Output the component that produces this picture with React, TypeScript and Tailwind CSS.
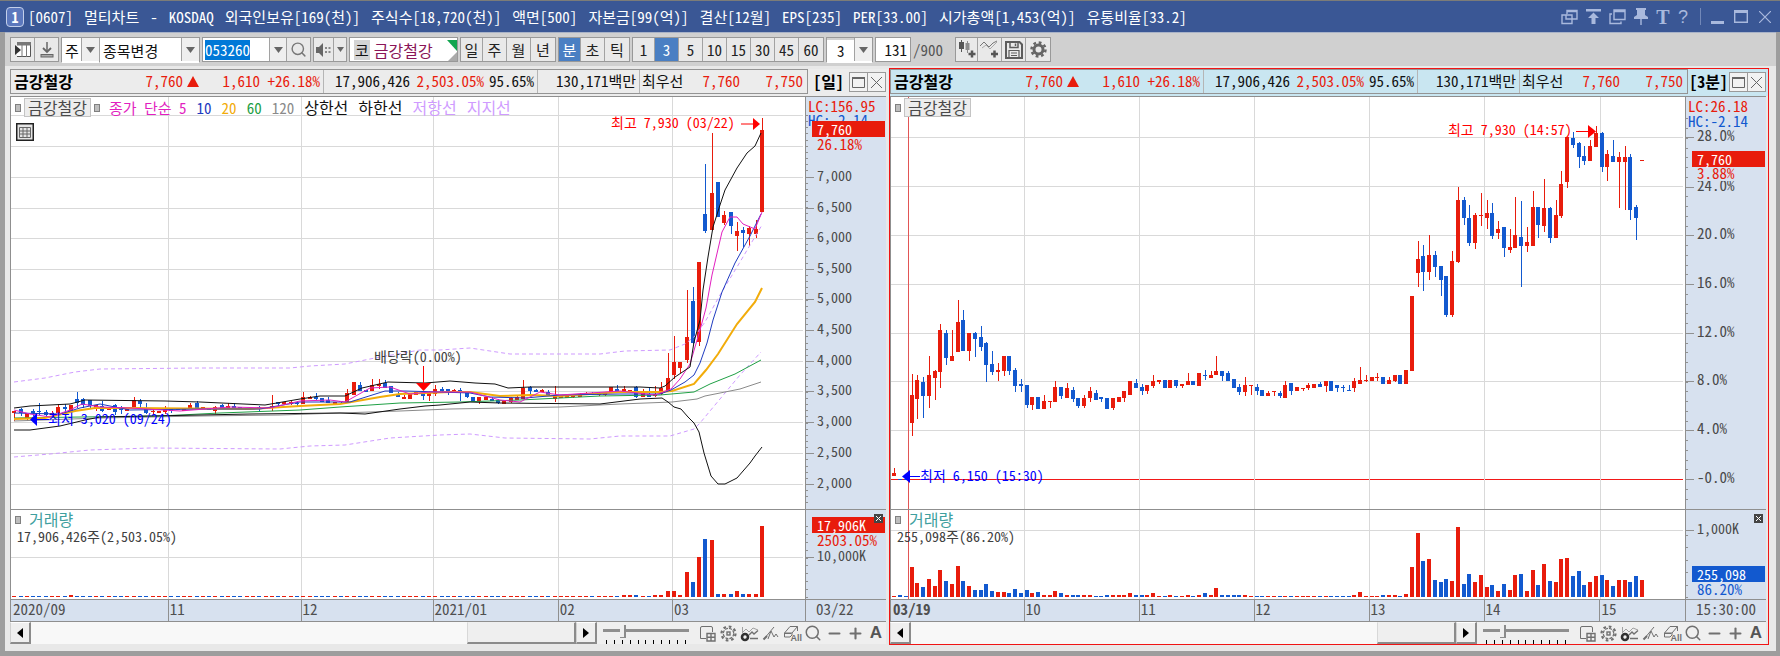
import type { ReactNode } from 'react';
import { Minus, Plus, Search } from 'lucide-react';

type Tone = 'r' | 'b';
type Candle = { tone: Tone; high: number; top: number; bottom: number; low: number };
type Point = [number, number];

const RED = '#e81c0c';
const BLUE = '#1259cf';
const GRID = '#d9d9d9';
const PRICE_TOP = 97;
const PRICE_H = 412;
const VOL_TOP = 510;
const VOL_H = 89;
const PLOT_W = 794;
const BASE = 597;

// Each entry: tone, high, body top, body bottom, low.
const parse = (source: string): Candle[] =>
  source
    .trim()
    .split(/\s+/)
    .map((entry) => {
      const [high, top, bottom, low] = entry.slice(1).split(',').map(Number);
      return { tone: entry[0] as Tone, high, top, bottom, low };
    });

const DAILY = parse(`
r411,411,413,421 b408,409,413,416 r413,413,418,421 b409,411,413,416 b403,411,412,415 b410,412,415,418
r411,413,415,416 r404,407,413,414 b404,407,409,413 r405,405,412,412 b392,399,403,408 b398,399,405,408
b400,400,406,408 r405,405,409,411 b401,406,411,412 r408,408,410,410 b404,405,412,415 b406,409,410,414
r407,407,411,411 r397,400,407,407 b399,401,404,408 b403,408,413,414 r408,411,412,414 r411,411,413,413
r406,408,412,414 b408,408,411,413 b408,408,410,410 r408,408,411,411 r403,405,408,408 b401,403,409,409
r407,407,409,409 b408,408,410,410 r406,407,411,414 b404,405,409,409 r403,406,409,409 b403,406,408,409
b407,407,409,409 r408,408,410,410 r408,408,409,409 b406,407,409,411 r408,408,409,409 r395,406,408,411
b402,402,404,406 r402,402,404,405 r401,402,404,405 b401,403,404,407 r392,397,404,404 r396,397,399,399
b393,397,399,400 b398,398,402,402 b397,400,403,403 r402,402,404,404 b401,401,402,404 r389,393,402,403
r382,382,395,395 b382,385,391,391 b390,390,392,392 r379,385,391,391 r379,384,386,389 b380,383,388,388
b386,386,393,393 b392,394,397,397 r395,397,399,399 r394,394,399,399 r392,392,395,395 b392,394,396,400
r391,393,396,401 r385,389,394,396 b387,389,391,393 b389,389,393,395 r389,390,392,393 b388,390,393,401
b391,391,397,398 b397,397,401,401 r397,397,401,404 r396,397,400,400 b397,399,401,401 b399,400,403,404
r400,401,404,404 r397,398,402,403 r396,397,400,400 r380,388,399,399 b386,387,391,394 b389,390,392,392
r389,390,392,392 b390,392,396,396 r386,395,399,402 r395,396,398,398 r396,396,398,398 r396,396,397,398
r393,394,397,397 r392,393,395,395 b392,393,395,395 r392,393,395,396 r393,393,395,396 r387,387,393,393
b385,389,393,393 r386,389,392,393 r390,390,393,393 b386,387,397,398 r389,391,397,397 b388,394,397,397
r386,394,396,397 r382,388,394,395 r353,378,391,391 r336,362,375,379 r362,362,368,373 r290,337,360,363
b287,301,343,344 r262,262,342,346 b164,214,231,233 r133,193,230,230 b182,182,217,217 r211,215,223,225
b212,212,226,234 r222,231,236,251 b227,230,233,247 r226,228,234,246 r220,229,234,238 r118,130,212,212`);

const MINUTE = parse(`
r468,473,476,476 b479,479,480,479 b479,479,480,479 r374,395,423,436 r375,380,399,419 b377,382,396,418
r356,375,396,408 r370,371,378,400 r324,330,372,388 b330,333,358,365 r330,356,361,361 r300,322,352,352
b310,320,351,351 r333,333,351,361 b332,333,339,357 b326,337,347,351 b342,343,365,382 b351,364,372,375
r363,370,372,381 r356,356,371,376 b356,356,371,375 b368,370,386,392 b379,384,386,392 b385,385,405,408
r397,397,405,410 b397,397,409,409 r395,401,409,409 r401,401,402,408 r381,387,402,402 b387,387,396,399
r383,388,398,398 b387,390,399,402 b398,398,406,408 r395,398,406,408 r387,391,398,402 b390,393,400,400
b397,397,399,402 b398,398,409,409 r398,398,408,410 r397,397,402,402 r391,391,398,402 r381,381,395,395
b379,383,388,388 b384,387,391,395 r385,385,391,394 r375,381,386,388 r380,380,382,384 b380,380,388,388
r380,380,388,388 b380,380,386,388 r384,384,386,388 r373,381,385,385 b381,381,385,385 r373,373,386,386
b370,375,376,380 r371,375,378,378 r356,371,375,375 b371,371,376,381 b371,373,381,381 b379,379,388,388
b384,387,392,395 r377,385,392,396 r385,385,386,395 b384,387,391,395 b390,390,396,396 r391,393,396,396
r391,391,392,396 b391,393,396,398 r381,385,398,398 b383,383,391,395 r387,387,391,391 r388,388,389,391
r383,385,388,390 r384,384,388,388 b382,384,387,387 r381,381,386,392 b381,381,391,391 b385,385,388,392
b385,387,388,392 b385,390,391,391 r378,381,388,392 r367,380,384,384 r375,380,381,382 r377,377,381,381
r373,377,378,381 b377,377,384,384 r377,380,384,384 r375,375,381,382 b375,375,384,384 r370,370,384,384
r296,296,371,371 r241,259,273,287 b245,256,272,291 r235,255,272,280 b251,255,267,277 b266,266,280,296
b276,276,315,317 r251,261,315,317 r187,200,262,263 b197,200,218,225 b205,218,243,246 r213,215,243,249
r193,215,216,226 r200,213,218,229 b203,213,236,239 r221,229,233,239 b227,227,248,257 r229,247,250,253
r197,235,248,248 b201,237,246,287 r227,242,246,252 r191,207,246,246 b207,207,225,238 r179,208,226,232
b207,208,238,243 r200,215,238,238 r171,184,216,218 r137,137,182,188 b132,138,145,148 b142,143,157,168
b146,156,161,165 r140,146,161,161 r126,133,147,147 b132,133,167,172 r150,154,167,181 b140,156,162,162
r152,157,162,208 r146,157,162,210 b154,157,210,220 b205,207,218,240 r160,160,161,161`);

const DAILY_VOL: Record<number, number> = {
  9: 2, 97: 2, 98: 2, 99: 2, 102: 2, 103: 2, 104: 6, 105: 6, 106: 2, 107: 25, 108: 15, 109: 40,
  110: 58, 111: 57, 112: 3, 113: 3, 114: 3, 115: 6, 116: 3, 117: 3, 118: 3, 119: 71,
};

const MINUTE_VOL = [
  1, 2, 1, 30, 14, 10, 18, 11, 27, 16, 13, 31, 16, 11, 7, 7, 13, 6, 5, 5, 4, 8, 4, 7, 4, 5, 2, 2, 6, 4, 2, 2, 2, 2, 2,
  1, 1, 2, 2, 2, 2, 4, 2, 2, 2, 4, 1, 1, 2, 1, 1, 2, 1, 2, 4, 2, 9, 2, 2, 2, 2, 2, 1, 1, 1, 1, 1, 1, 1, 1, 1, 1, 1, 1,
  1, 1, 1, 1, 1, 1, 2, 5, 1, 1, 1, 2, 2, 2, 1, 3, 30, 64, 36, 38, 17, 15, 18, 16, 70, 13, 23, 15, 22, 10, 12, 6, 13, 7,
  22, 23, 6, 27, 12, 33, 16, 15, 38, 39, 21, 26, 12, 15, 21, 22, 17, 11, 17, 17, 15, 21, 17,
];

const dailyX = (i: number) => Math.round(14.3 + 6.283 * i);
const minuteX = (i: number) => Math.round(894.3 + 5.75 * i);

type Curve = { color: string; width?: number; dash?: string; points: Point[] };

const CURVES: Curve[] = [
  { color: '#cf9bff', dash: '4 3', points: [[14, 382], [45, 378], [75, 372], [100, 369], [200, 368], [290, 368], [310, 366], [345, 364], [375, 358], [420, 350], [440, 350], [470, 348], [510, 354], [600, 354], [625, 351], [670, 350], [685, 344], [695, 336], [705, 322], [720, 295], [740, 262], [762, 225]] },
  { color: '#cf9bff', dash: '4 3', points: [[14, 457], [50, 454], [90, 450], [150, 448], [280, 449], [310, 446], [345, 445], [390, 438], [440, 435], [470, 434], [505, 438], [590, 439], [620, 436], [670, 436], [694, 429], [700, 423], [715, 405], [740, 375], [761, 352]] },
  { color: '#8a8a8a', points: [[14, 421], [100, 418], [200, 416], [280, 415], [400, 411], [450, 409], [560, 407], [620, 404], [672, 402], [697, 399], [705, 396], [740, 389], [761, 382]] },
  { color: '#1fa045', points: [[14, 418], [80, 417], [160, 416], [220, 413], [300, 410], [340, 407], [400, 403], [460, 402], [520, 400], [600, 396], [660, 395], [694, 392], [710, 384], [735, 374], [761, 360]] },
  { color: '#f2ac0a', width: 2, points: [[14, 419], [45, 418], [75, 411], [95, 408], [130, 408], [250, 409], [300, 406], [340, 404], [380, 397], [400, 394], [450, 392], [470, 392], [500, 396], [530, 395], [560, 396], [620, 392], [660, 392], [672, 391], [694, 384], [706, 370], [718, 354], [737, 324], [755, 302], [762, 288]] },
  { color: '#1f3bc0', points: [[14, 413], [60, 414], [80, 408], [100, 404], [130, 410], [200, 409], [260, 409], [300, 402], [350, 402], [385, 391], [405, 391], [440, 392], [470, 393], [490, 397], [525, 398], [560, 395], [620, 394], [660, 394], [671, 390], [685, 382], [694, 375], [700, 363], [707, 343], [713, 320], [722, 292], [735, 263], [750, 236], [761, 214]] },
  { color: '#e21fc0', points: [[14, 410], [30, 414], [50, 417], [70, 410], [82, 404], [100, 407], [130, 408], [180, 411], [230, 407], [270, 408], [300, 401], [330, 400], [345, 402], [370, 388], [390, 387], [410, 394], [430, 392], [470, 392], [500, 400], [520, 402], [540, 392], [560, 395], [620, 391], [655, 395], [671, 389], [680, 379], [690, 364], [700, 330], [706, 308], [712, 275], [722, 232], [730, 217], [737, 217], [743, 224], [755, 229], [762, 212]] },
  { color: '#111111', points: [[14, 430], [30, 430], [60, 426], [85, 420], [100, 417], [150, 416], [250, 414], [340, 413], [365, 414], [400, 409], [425, 406], [440, 405], [470, 402], [500, 403], [600, 404], [640, 399], [662, 398], [668, 402], [674, 407], [681, 409], [688, 417], [694, 423], [699, 432], [704, 453], [711, 476], [718, 484], [725, 484], [737, 478], [750, 463], [755, 456], [762, 447]] },
  { color: '#111111', points: [[14, 408], [30, 406], [70, 404], [85, 400], [165, 401], [200, 402], [265, 405], [300, 399], [320, 396], [345, 396], [362, 388], [388, 382], [425, 383], [450, 381], [475, 383], [495, 384], [508, 388], [530, 387], [640, 387], [660, 388], [665, 386], [675, 377], [690, 367], [694, 342], [700, 320], [703, 290], [708, 257], [713, 227], [720, 205], [725, 190], [737, 168], [747, 153], [755, 146], [761, 133]] },
];

type Note = { text: string; x: number; y: number; cls: string };
type Mark = { text: string; y: number; cls?: string; tick?: boolean };

type PanelData = {
  id: string;
  x0: number;
  active: boolean;
  period: string;
  candles: Candle[];
  xAt: (i: number) => number;
  volumes: (i: number) => number;
  vGrid: number[];
  hGrid: number[];
  volGrid: number;
  notes: Note[];
  priceMarks: Mark[];
  volMarks: Mark[];
  minorStep: number;
  volStep: number;
  dates: { text: string; from: number; to: number }[];
  lastDate: string;
  volumeText: string;
  thumb: string;
};

const tagRed = 'bg-[#e81c0c] text-white w-[73px] left-[6px] pl-[5px]';
const tagBlue = 'bg-[#1259cf] text-white w-[73px] left-[6px] pl-[5px]';
const labelCls = 'left-[11px] text-[#4a4a4a]';

const PANELS: PanelData[] = [
  {
    id: 'day', x0: 11, active: false, period: '[일]', candles: DAILY, xAt: dailyX,
    volumes: (i) => DAILY_VOL[i] ?? 1,
    vGrid: [168, 301, 433, 558, 672],
    hGrid: [115, 146, 177, 208, 238, 269, 299, 330, 361, 391, 422, 453, 484],
    volGrid: 557,
    notes: [
      { text: '최고 7,930 (03/22)', x: 611, y: 122, cls: 'text-[#ff0000]' },
      { text: '배당락(0.00%)', x: 374, y: 356, cls: 'text-[#404040]' },
      { text: '최저 3,020 (09/24)', x: 48, y: 418, cls: 'text-[#0000ff]' },
    ],
    priceMarks: [
      { text: 'LC:156.95', y: 107, cls: 'left-[2px] text-[15px] text-[#e81c0c]' },
      { text: 'HC:-2.14', y: 121, cls: 'left-[2px] text-[15px] text-[#1259cf]' },
      { text: '7,760', y: 130, cls: tagRed },
      { text: '26.18%', y: 145, cls: 'left-[11px] text-[15px] text-[#e81c0c]' },
      { text: '7,000', y: 177, tick: true },
      { text: '6,500', y: 208, tick: true },
      { text: '6,000', y: 238, tick: true },
      { text: '5,500', y: 269, tick: true },
      { text: '5,000', y: 299, tick: true },
      { text: '4,500', y: 330, tick: true },
      { text: '4,000', y: 361, tick: true },
      { text: '3,500', y: 391, tick: true },
      { text: '3,000', y: 422, tick: true },
      { text: '2,500', y: 453, tick: true },
      { text: '2,000', y: 484, tick: true },
    ],
    volMarks: [
      { text: '17,906K', y: 526, cls: tagRed },
      { text: '2503.05%', y: 541, cls: 'left-[11px] text-[15px] text-[#e81c0c]' },
      { text: '10,000K', y: 557, tick: true },
    ],
    minorStep: 6.15, volStep: 7.9,
    dates: [
      { text: '2020/09', from: 11, to: 168 },
      { text: '11', from: 168, to: 301 },
      { text: '12', from: 301, to: 433 },
      { text: '2021/01', from: 433, to: 558 },
      { text: '02', from: 558, to: 672 },
      { text: '03', from: 672, to: 805 },
    ],
    lastDate: '03/22', volumeText: '17,906,426주(2,503.05%)', thumb: 'w-[109px]',
  },
  {
    id: 'minute', x0: 891, active: true, period: '[3분]', candles: MINUTE, xAt: minuteX,
    volumes: (i) => MINUTE_VOL[i] ?? 1,
    vGrid: [1024, 1139, 1254, 1369, 1484, 1600],
    hGrid: [137, 186, 235, 284, 333, 381, 430],
    volGrid: 530,
    notes: [
      { text: '최고 7,930 (14:57)', x: 1448, y: 129, cls: 'text-[#ff0000]' },
      { text: '최저 6,150 (15:30)', x: 920, y: 475, cls: 'text-[#0000ff]' },
    ],
    priceMarks: [
      { text: 'LC:26.18', y: 107, cls: 'left-[2px] text-[15px] text-[#e81c0c]' },
      { text: 'HC:-2.14', y: 122, cls: 'left-[2px] text-[15px] text-[#1259cf]' },
      { text: '28.0%', y: 137, tick: true },
      { text: '24.0%', y: 187, tick: true },
      { text: '3.88%', y: 174, cls: 'left-[11px] text-[15px] text-[#e81c0c] bg-[#d7e1ef]' },
      { text: '7,760', y: 160, cls: tagRed },
      { text: '20.0%', y: 235, tick: true },
      { text: '16.0%', y: 284, tick: true },
      { text: '12.0%', y: 333, tick: true },
      { text: '8.0%', y: 381, tick: true },
      { text: '4.0%', y: 430, tick: true },
      { text: '-0.0%', y: 479, tick: true },
    ],
    volMarks: [
      { text: '1,000K', y: 530, tick: true },
      { text: '255,098', y: 575, cls: tagBlue },
      { text: '86.20%', y: 590, cls: 'left-[11px] text-[15px] text-[#1259cf]' },
    ],
    minorStep: 9.75, volStep: 12.5,
    dates: [
      { text: '03/19', from: 891, to: 1024 },
      { text: '10', from: 1024, to: 1139 },
      { text: '11', from: 1139, to: 1254 },
      { text: '12', from: 1254, to: 1369 },
      { text: '13', from: 1369, to: 1484 },
      { text: '14', from: 1484, to: 1600 },
      { text: '15', from: 1600, to: 1685 },
    ],
    lastDate: '15:30:00', volumeText: '255,098주(86.20%)', thumb: 'w-[79px]',
  },
];

const toneOf = (t: Tone) => (t === 'r' ? RED : BLUE);
const toPath = (pts: Point[]) => pts.map((p) => p.join(',')).join(' ');
const pct = (v: number, from: number, size: number) => `${((v - from) / size) * 100}%`;

function PricePlot({ p }: { p: PanelData }) {
  return (
    <svg className="absolute inset-0 size-full" viewBox={`${p.x0} ${PRICE_TOP} ${PLOT_W} ${PRICE_H}`} preserveAspectRatio="none" aria-hidden="true">
      <g shapeRendering="crispEdges">
        {p.active && <rect x={p.x0} y={479} width={PLOT_W - 2} height={1} fill="#f21818" />}
        {p.hGrid.map((y) => <rect key={y} x={p.x0} y={y} width={PLOT_W - 2} height={1} fill={GRID} />)}
        {p.vGrid.map((x) => <rect key={x} x={x} y={PRICE_TOP} width={1} height={PRICE_H} fill={GRID} />)}
        {p.active && <rect x={908} y={PRICE_TOP} width={1} height={PRICE_H} fill="#e25555" />}
      </g>
      <g shapeRendering="crispEdges">
        {p.candles.map((c, i) => (
          <g key={i} fill={toneOf(c.tone)}>
            <rect x={p.xAt(i)} y={c.high} width={1} height={Math.max(c.low - c.high, 1)} />
            <rect x={p.xAt(i) - 2} y={c.top} width={4} height={Math.max(c.bottom - c.top, 1)} />
          </g>
        ))}
      </g>
      {!p.active && CURVES.map((c, i) => (
        <polyline key={i} points={toPath(c.points)} fill="none" stroke={c.color} strokeWidth={c.width ?? 1} strokeDasharray={c.dash} />
      ))}
      {p.active ? (
        <g>
          <path d="M1576 131.5H1589" stroke="#ff0000" />
          <path d="M1588 125V138L1596 131.5Z" fill="#ff0000" />
          <path d="M908 476.5H920" stroke="#0000ff" />
          <path d="M910 470V483L902 476.5Z" fill="#0000ff" />
        </g>
      ) : (
        <g>
          <path d="M741 124H753" stroke="#ff0000" />
          <path d="M753 118V130L760 124Z" fill="#ff0000" />
          <path d="M423.500 366V384" stroke="#ff0000" />
          <path d="M416 383H431L423.500 391Z" fill="#ff0000" />
          <path d="M36 419.500H49" stroke="#0000ff" />
          <path d="M37 413V426L30 419.500Z" fill="#0000ff" />
        </g>
      )}
    </svg>
  );
}

function VolumePlot({ p }: { p: PanelData }) {
  return (
    <svg className="absolute inset-0 size-full" viewBox={`${p.x0} ${VOL_TOP} ${PLOT_W} ${VOL_H}`} preserveAspectRatio="none" shapeRendering="crispEdges" aria-hidden="true">
      <rect x={p.x0} y={p.volGrid} width={PLOT_W - 2} height={1} fill={GRID} />
      {p.vGrid.map((x) => <rect key={x} x={x} y={VOL_TOP} width={1} height={VOL_H} fill={GRID} />)}
      {p.active && <rect x={908} y={VOL_TOP} width={1} height={VOL_H} fill="#e25555" />}
      {p.candles.map((c, i) => (
        <rect key={i} x={p.xAt(i) - 2} y={BASE - p.volumes(i)} width={4} height={p.volumes(i)} fill={toneOf(c.tone)} />
      ))}
    </svg>
  );
}

function Axis({ marks, top, size, step, origin }: { marks: Mark[]; top: number; size: number; step: number; origin: number }) {
  const minors: number[] = [];
  for (let y = origin; y > top + 12; y -= step) minors.push(y);
  for (let y = origin + step; y < top + size - 2; y += step) minors.push(y);
  return (
    <div className="relative w-[81px] shrink-0 border-l border-[#8f8f8f] bg-[#d7e1ef] text-[14px]">
      <svg className="absolute inset-y-0 left-0 h-full w-2" viewBox={`0 ${top} 8 ${size}`} preserveAspectRatio="none" shapeRendering="crispEdges" aria-hidden="true">
        {minors.map((y) => <rect key={y} x={0} y={Math.round(y)} width={2} height={1} fill="#909090" />)}
        {marks.filter((m) => m.tick).map((m) => <rect key={m.y} x={0} y={m.y} width={8} height={1} fill="#909090" />)}
      </svg>
      {marks.map((m) => (
        <span
          key={m.text}
          className={`absolute -translate-y-1/2 leading-4 whitespace-nowrap ${m.cls ?? labelCls} ${m.tick && m.text.endsWith('%') ? 'text-[15px]' : ''}`}
          style={{ top: pct(m.tick ? m.y - 2 : m.y - 1, top, size) }}
        >
          {m.text}
        </span>
      ))}
    </div>
  );
}

function Handle() {
  return <i className="h-[8px] w-[6px] shrink-0 border border-[#808080] bg-[#bdbdbd]" />;
}

const LEGEND: [string, string][] = [
  ['종가 단순 5', 'text-[#e21fc0]'],
  ['10', 'text-[#1f3bc0]'],
  ['20', 'text-[#f2ac0a]'],
  ['60', 'text-[#1fa045]'],
  ['120', 'text-[#8a8a8a]'],
  ['상한선', 'text-[16px] text-[#111111]'],
  ['하한선', 'text-[16px] text-[#111111]'],
  ['저항선', 'text-[16px] text-[#cf9bff]'],
  ['지지선', 'text-[16px] text-[#cf9bff]'],
];

function QuoteStrip() {
  return (
    <div className="flex h-[25px] flex-1 items-stretch border border-[#949494] text-right text-[15px] leading-[22px] whitespace-nowrap text-[#111]">
      <b className="flex-1 pl-[3px] text-left text-[16px] font-bold text-black">금강철강</b>
      <span className="text-[#e81c0c]">7,760</span>
      <span className="flex w-5 items-center justify-center text-[#e81c0c]">
        <svg width="12" height="11" viewBox="0 0 12 11" aria-hidden="true"><path d="M6 0L12 11H0Z" fill="currentColor" /></svg>
      </span>
      <span className="w-[57px] text-[#e81c0c]">1,610</span>
      <span className="w-16 border-r border-[#b5b5b5] pr-[3px] text-[#e81c0c]">+26.18%</span>
      <span className="w-[86px]">17,906,426</span>
      <span className="w-[74px] text-[#e81c0c]">2,503.05%</span>
      <span className="w-[54px] border-r border-[#b5b5b5] pr-[3px]">95.65%</span>
      <span className="w-[102px] border-r border-[#b5b5b5] pr-[3px]">130,171백만</span>
      <span className="w-12 pl-[2px] text-left">최우선</span>
      <span className="w-[52px] text-[#e81c0c]">7,760</span>
      <span className="w-[67px] pr-1 text-[#e81c0c]">7,750</span>
    </div>
  );
}

function FooterTools() {
  return (
    <div className="flex items-center text-[#707070]">
      <button aria-label="창 배치" className="flex w-[21px] justify-center">
        <svg width="17" height="17" viewBox="0 0 17 17" fill="none" stroke="currentColor" aria-hidden="true">
          <path d="M7 13.500H1.500V3Q1.500 1.500 3 1.500H12Q13.500 1.500 13.500 3V7" />
          <path d="M8 8.500H16V16H8ZM12 8.500V16M8 12.200H16" strokeWidth="1.400" />
        </svg>
      </button>
      <button aria-label="차트 설정" className="flex w-[21px] justify-center">
        <svg width="17" height="17" viewBox="0 0 17 17" fill="none" stroke="currentColor" aria-hidden="true">
          <circle cx="8.500" cy="8.500" r="7" strokeWidth="2.200" strokeDasharray="2.700 2.800" />
          <circle cx="8.500" cy="8.500" r="5.200" strokeWidth="1.200" strokeDasharray="3 1.080" />
          <rect x="7" y="7" width="3" height="3" strokeWidth="1.400" />
        </svg>
      </button>
      <button aria-label="지표 추가" className="flex w-[21px] justify-center">
        <svg width="19" height="17" viewBox="0 0 19 17" fill="none" stroke="currentColor" aria-hidden="true">
          <path d="M2.500 2V8M2 8L6 4L9 7L13 3L18 5" stroke="#a0a0a0" />
          <path d="M9 10L12 7L14 9L18 5.500M10 13.500H18" strokeWidth="1.400" />
          <circle cx="5" cy="12" r="3" stroke="#303030" strokeWidth="2.600" />
        </svg>
      </button>
      <button aria-label="추세선" className="flex w-[21px] justify-center">
        <svg width="17" height="17" viewBox="0 0 17 17" fill="none" stroke="currentColor" aria-hidden="true">
          <path d="M2 14L12 2M6 14L9 6L12 12L14 9L16 12" />
          <path d="M1.500 14.500L5 11" strokeWidth="2" />
        </svg>
      </button>
      <button aria-label="전체 지우기" className="relative flex w-[21px] justify-center">
        <svg width="17" height="17" viewBox="0 0 17 17" fill="none" stroke="currentColor" aria-hidden="true">
          <path d="M1.500 8L7 1.500H14.500L9 8ZM1.500 8V12H7L9 10V8M14.500 1.500V6M2 8.500H8" />
        </svg>
        <span className="absolute right-0 bottom-0 font-['Liberation_Sans'] text-[9px] leading-[8px] font-bold">All</span>
      </button>
      <button aria-label="돋보기" className="flex w-[22px] justify-center"><Search size={18} strokeWidth={2} /></button>
      <button aria-label="축소" className="flex w-[20px] justify-center"><Minus size={17} strokeWidth={3} /></button>
      <button aria-label="확대" className="flex w-[22px] justify-center"><Plus size={17} strokeWidth={3} /></button>
      <button aria-label="자동 맞춤" className="w-[20px] font-['Liberation_Sans'] text-[17px] leading-4 font-bold text-[#555]">A</button>
    </div>
  );
}

function ScrollArrow({ dir }: { dir: 'left' | 'right' }) {
  return (
    <button aria-label={dir === 'left' ? '왼쪽으로' : '오른쪽으로'} className="flex w-[21px] shrink-0 items-center justify-center border-t border-r-2 border-b-2 border-l border-t-white border-r-[#8b8b8b] border-b-[#8b8b8b] border-l-[#d0d0d0] bg-[#efefef]">
      <svg width="6" height="10" viewBox="0 0 6 10" aria-hidden="true"><path d={dir === 'left' ? 'M6 0V10L0 5Z' : 'M0 0V10L6 5Z'} fill="#000" /></svg>
    </button>
  );
}

function ScrollRow({ thumb }: { thumb: string }) {
  return (
    <div className="flex h-[22px] bg-[#efefef]">
      <ScrollArrow dir="left" />
      <div className="flex flex-1 justify-end bg-[#f8f8f8]">
        <div className={`${thumb} border-t border-r-2 border-b-2 border-l border-t-[#efefef] border-r-[#8b8b8b] border-b-[#8b8b8b] border-l-[#d8d8d8] bg-[#efefef]`} />
      </div>
      <ScrollArrow dir="right" />
      <div className="ml-[6px] flex w-[86px] flex-col justify-between pt-px">
        <input
          type="range"
          aria-label="봉 간격"
          min={0}
          max={100}
          defaultValue={21}
          className="h-[14px] w-full appearance-none bg-transparent [&::-webkit-slider-runnable-track]:h-[3px] [&::-webkit-slider-runnable-track]:bg-[#8f8f8f] [&::-webkit-slider-thumb]:mt-[-4px] [&::-webkit-slider-thumb]:h-[13px] [&::-webkit-slider-thumb]:w-[6px] [&::-webkit-slider-thumb]:appearance-none [&::-webkit-slider-thumb]:border-r-2 [&::-webkit-slider-thumb]:border-b [&::-webkit-slider-thumb]:border-[#8b8b8b] [&::-webkit-slider-thumb]:bg-[#efefef]"
        />
        <div className="flex justify-between px-[3px]">
          {Array.from({ length: 11 }, (_, i) => <i key={i} className="h-[4px] w-px bg-black" />)}
        </div>
      </div>
      <div className="flex pl-2"><FooterTools /></div>
    </div>
  );
}

function ChartPanel({ p }: { p: PanelData }) {
  return (
    <section
      aria-label={`금강철강 ${p.period}`}
      className={`flex min-w-0 flex-col border ${p.active ? 'border-[#f01414]' : 'border-transparent'}`}
    >
      <div className={`flex h-[27px] pr-[2px] ${p.active ? 'bg-[#c9e6f1]' : 'bg-[#ececec]'}`}>
        <QuoteStrip />
        <b className="w-[41px] text-center text-[16px] leading-6 font-bold whitespace-nowrap text-black">{p.period}</b>
        <div className="mt-[3px] flex h-[20px] border border-[#9a9a9a] bg-[#f2f2f2] text-[#666]">
          <button aria-label="최대화" className="flex w-[18px] items-center justify-center border-r border-[#9a9a9a]">
            <svg width="13" height="11" viewBox="0 0 13 11" fill="none" stroke="currentColor" aria-hidden="true"><path d="M.5 1V10.500H12.500V1" /><path d="M0 1H13" strokeWidth="2" /></svg>
          </button>
          <button aria-label="닫기" className="flex w-[17px] items-center justify-center">
            <svg width="11" height="11" viewBox="0 0 11 11" stroke="currentColor" aria-hidden="true"><path d="M0 0L11 11M11 0L0 11" /></svg>
          </button>
        </div>
      </div>

      <div className="mr-[2px] flex flex-1 flex-col border-t border-l border-[#8f8f8f]">
        <div className="flex min-h-[300px] flex-1">
          <div className="relative flex-1 bg-white">
            <PricePlot p={p} />
            <div className="absolute top-px left-[4px] flex items-center gap-[3px] text-[15px] leading-[17px] whitespace-nowrap">
              <Handle />
              <span className="border border-[#c4c4c4] bg-[#ededed] px-[3px] text-[16px] text-[#4a4a4a]">금강철강</span>
              {!p.active && (
                <>
                  <Handle />
                  <span className="ml-[6px] flex gap-[10px]">
                    {LEGEND.map(([text, cls]) => <span key={text} className={cls}>{text}</span>)}
                  </span>
                </>
              )}
            </div>
            {!p.active && (
              <button aria-label="데이터 표" className="absolute top-[26px] left-[5px]">
                <svg width="18" height="18" viewBox="0 0 18 18" fill="none" stroke="#666" aria-hidden="true">
                  <rect x=".75" y=".75" width="16.500" height="16.500" fill="#e4e4e4" stroke="#222" strokeWidth="1.500" />
                  <path d="M3.500 4.500H14.500V14.500H3.500ZM7 4.500V14.500M11 4.500V14.500M3.500 8H14.500M3.500 11H14.500" />
                </svg>
              </button>
            )}
            {p.notes.map((n) => (
              <span
                key={n.text}
                className={`absolute -translate-y-1/2 text-[14px] leading-4 whitespace-nowrap ${n.cls}`}
                style={{ left: pct(n.x, p.x0, PLOT_W), top: pct(n.y, PRICE_TOP, PRICE_H) }}
              >
                {n.text}
              </span>
            ))}
          </div>
          <Axis marks={p.priceMarks} top={PRICE_TOP} size={PRICE_H} step={p.minorStep} origin={p.active ? 479 : 484} />
        </div>

        <div className="flex h-[90px] border-t border-[#8f8f8f]">
          <div className="relative flex-1 bg-white">
            <VolumePlot p={p} />
            <div className="absolute top-px left-[4px] text-[#404040]">
              <div className="flex items-center gap-[8px] text-[16px] leading-[17px] text-[#3f9f9f]"><Handle />거래량</div>
              <div className="pl-[2px] text-[14px] leading-[17px]">{p.volumeText}</div>
            </div>
          </div>
          <div className="relative flex">
            <Axis marks={p.volMarks} top={VOL_TOP} size={VOL_H} step={p.volStep} origin={BASE} />
            <button aria-label="거래량 닫기" className="absolute top-[4px] right-[3px] flex size-[9px] items-center justify-center bg-[#444]">
              <svg width="5" height="5" viewBox="0 0 5 5" stroke="#fff" aria-hidden="true"><path d="M0 0L5 5M5 0L0 5" /></svg>
            </button>
          </div>
        </div>

        <div className="flex h-[23px] border-y border-[#8f8f8f] bg-[#d7e1ef] text-[15px] leading-[18px] text-[#4f4f4f]">
          <div className="flex flex-1">
            {p.dates.map((d, i) => (
              <div
                key={d.text}
                className={`whitespace-nowrap ${i > 0 ? 'border-l border-[#8f8f8f] pl-px' : 'pl-[2px]'} ${p.active && i === 0 ? 'font-bold' : ''}`}
                style={{ flex: `${d.to - d.from} 1 0` }}
              >
                {d.text}
              </div>
            ))}
          </div>
          <div className="w-[81px] border-l border-[#8f8f8f] pl-[10px]">{p.lastDate}</div>
        </div>
      </div>
      <div className="mr-[2px]"><ScrollRow thumb={p.thumb} /></div>
    </section>
  );
}

function Group({ children, white }: { children: ReactNode; white?: boolean }) {
  return (
    <div className={`flex h-[25px] divide-x divide-[#a2a2a2] border border-[#999] ${white ? 'bg-white' : 'bg-[#e9e9e9]'}`}>
      {children}
    </div>
  );
}

function Down() {
  return <svg width="9" height="6" viewBox="0 0 9 6" aria-hidden="true"><path d="M0 0H9L4.500 6Z" fill="#666" /></svg>;
}

function Combo({ label, value, width }: { label: string; value: string; width: string }) {
  return (
    <div className={`relative ${width}`}>
      <select aria-label={label} defaultValue={value} className="size-full appearance-none bg-white pr-5 pl-[3px] text-[15px] leading-[22px] text-[#111] outline-none">
        <option>{value}</option>
      </select>
      <span className="pointer-events-none absolute inset-y-0 right-0 flex w-[18px] items-center justify-center border-l border-[#a2a2a2] bg-[#efefef]"><Down /></span>
    </div>
  );
}

function TextButtons({ items, active }: { items: string[]; active?: string }) {
  return (
    <Group>
      {items.map((t, i) => (
        <button
          key={t}
          aria-pressed={t === active}
          className={`${i === 0 ? 'w-[22px]' : 'w-[24px]'} text-center text-[15px] leading-[22px] ${t === active ? 'bg-[#4a7fc3] text-white' : 'text-[#222]'}`}
        >
          {t}
        </button>
      ))}
    </Group>
  );
}

function Toolbar() {
  return (
    <div className="flex h-[34px] items-center gap-[2px] border-t border-[#a9b3c8] bg-[#d0d0d0] pl-[5px] text-[#555]">
      <Group>
        <button aria-label="패널 열기" className="flex w-[24px] items-center justify-center">
          <svg width="16" height="17" viewBox="0 0 16 17" aria-hidden="true">
            <path d="M2 1.500H15.500V15.500H2" fill="#fff" stroke="#555" />
            <path d="M2 1H16V4.500H2ZM6.500 4H7.500V16H6.500ZM11 4H12V16H11Z" fill="#777" />
            <path d="M0 4L6 9L0 14Z" fill="#333" />
          </svg>
        </button>
        <button aria-label="내려받기" className="flex w-[23px] items-center justify-center">
          <svg width="14" height="17" viewBox="0 0 14 17" fill="none" stroke="#666" aria-hidden="true">
            <path d="M7 1V10" strokeWidth="1.500" /><path d="M3 7L7 11L11 7" strokeWidth="1.800" /><rect x="1" y="13.500" width="12" height="2.500" fill="#aaa" />
          </svg>
        </button>
      </Group>
      <Group white>
        <Combo label="구분" value="주" width="w-[38px]" />
        <Combo label="종목변경 방식" value="종목변경" width="w-[99px]" />
      </Group>
      <Group white>
        <input
          aria-label="종목코드"
          defaultValue="053260"
          autoFocus
          onFocus={(e) => e.currentTarget.select()}
          className="w-[67px] pl-[2px] text-[15px] leading-[20px] text-[#111] caret-[#f08030] outline-none selection:bg-[#0078d7] selection:text-white"
        />
        <button aria-label="최근 종목" className="flex w-[17px] items-center justify-center bg-[#efefef]"><Down /></button>
        <button aria-label="종목 검색" className="flex w-[23px] items-center justify-center bg-[#e9e9e9] text-[#777]"><Search size={17} strokeWidth={2} /></button>
      </Group>
      <Group>
        <button aria-label="음성" className="flex w-[20px] items-center justify-center">
          <svg width="15" height="14" viewBox="0 0 15 14" aria-hidden="true">
            <path d="M0 4H3L7 0V14L3 10H0Z" fill="#666" />
            <path d="M9 4H11V6H9ZM12.500 4H14.500V6H12.500ZM9 8H11V10H9ZM12.500 8H14.500V10H12.500Z" fill="#888" />
          </svg>
        </button>
        <button aria-label="음성 메뉴" className="flex w-[12px] items-center justify-center">
          <svg width="7" height="5" viewBox="0 0 7 5" aria-hidden="true"><path d="M0 0H7L3.500 5Z" fill="#666" /></svg>
        </button>
      </Group>
      <div className="relative flex h-[25px] w-[109px] items-center border border-[#999] bg-white text-[15px] leading-[20px] whitespace-nowrap">
        <span className="ml-[4px] bg-[#d4d4d4] px-px text-[#111]">코</span>
        <span className="ml-[4px] text-[16px] text-[#8a1558]">금강철강</span>
        <svg className="absolute top-[2px] right-0" width="10" height="21" viewBox="0 0 10 21" aria-hidden="true">
          <path d="M0 0H10V11Z" fill="#12a550" /><path d="M10 12V21H1Z" fill="#aaa" />
        </svg>
      </div>
      <TextButtons items={['일', '주', '월', '년']} />
      <TextButtons items={['분', '초', '틱']} active="분" />
      <TextButtons items={['1', '3', '5', '10', '15', '30', '45', '60']} active="3" />
      <div className="flex h-[25px] w-[47px] border border-[#999] [&_select]:pl-[10px]"><Combo label="분 단위" value="3" width="w-full" /></div>
      <input aria-label="표시 봉 수" defaultValue="131" className="h-[25px] w-[36px] border border-[#999] bg-white pr-[3px] text-right text-[15px] leading-[20px] text-[#111] outline-none" />
      <span className="w-[40px] text-[15px] leading-[20px] text-[#555]">/900</span>
      <Group>
        <button aria-label="봉 추가" className="flex w-[22px] items-center justify-center">
          <svg width="18" height="19" viewBox="0 0 18 19" fill="none" aria-hidden="true">
            <path d="M3 0H4V12H3ZM1 2H6V9H1Z" fill="#555" />
            <path d="M9 1H10V13H9ZM7.500 3H11.500V10H7.500Z" fill="#8c8c8c" />
            <path d="M14 10.500V17.500M10.500 14H17.500" stroke="#555" strokeWidth="2.500" />
          </svg>
        </button>
        <button aria-label="지표 추가" className="flex w-[24px] items-center justify-center">
          <svg width="19" height="19" viewBox="0 0 19 19" fill="none" stroke="#777" aria-hidden="true">
            <path d="M0 6L4 2L9 7L13 3L17 1" /><path d="M2 8L6 5L10 9L17 2" stroke="#aaa" />
            <path d="M14.500 10.500V17.500M11 14H18" stroke="#555" strokeWidth="2.500" />
          </svg>
        </button>
        <button aria-label="저장" className="flex w-[24px] items-center justify-center">
          <svg width="18" height="18" viewBox="0 0 18 18" fill="none" stroke="#5c5c5c" aria-hidden="true">
            <path d="M1 1H14.500L17 3.500V17H1Z" strokeWidth="2" />
            <path d="M5 1.500V6.500H13V1.500M10.500 2.500V5" strokeWidth="1.500" />
            <path d="M4 16.500V9.500H14V16.500M6 12H12M6 14.500H12" strokeWidth="1.200" />
          </svg>
        </button>
        <button aria-label="환경설정" className="flex w-[24px] items-center justify-center">
          <svg width="17" height="17" viewBox="0 0 17 17" fill="none" stroke="#666" aria-hidden="true">
            <circle cx="8.500" cy="8.500" r="4.500" strokeWidth="3" /><circle cx="8.500" cy="8.500" r="7" strokeWidth="2.500" strokeDasharray="2.750 2.750" />
          </svg>
        </button>
      </Group>
    </div>
  );
}

function TitleIcon({ label, width = 'w-6', children }: { label: string; width?: string; children: ReactNode }) {
  return <button aria-label={label} className={`flex ${width} items-center justify-center`}>{children}</button>;
}

const TITLE = [
  '[0607]', '멀티차트', '-', 'KOSDAQ', '외국인보유[169(천)]', '주식수[18,720(천)]', '액면[500]', '자본금[99(억)]',
  '결산[12월]', 'EPS[235]', 'PER[33.00]', '시가총액[1,453(억)]', '유통비율[33.2]',
];

function TitleBar() {
  return (
    <header className="flex h-[32px] items-center border-t border-[#7c7c78] bg-[#3a5795] pr-[3px] pl-[6px] text-white">
      <span className="flex h-[20px] w-[18px] items-center justify-center rounded-[4px] border border-[#c3cfea] bg-[#5c78bd] text-[14px] leading-4 font-bold">1</span>
      <h1 className="ml-[4px] flex flex-1 gap-[11px] text-[15px] leading-[22px] whitespace-nowrap">
        {TITLE.map((part) => <span key={part}>{part}</span>)}
      </h1>
      <div className="flex items-center text-[#a9b9dd]">
        <TitleIcon label="연결">
          <svg width="17" height="16" viewBox="0 0 17 16" fill="none" stroke="currentColor" strokeWidth="1.400" aria-hidden="true"><path d="M6 5V1.500H16V10H11" /><path d="M1 6H5V10H11V14.500H1ZM6 2.500H16" /><path d="M5 6H11V10" /></svg>
        </TitleIcon>
        <TitleIcon label="맨 위로">
          <svg width="15" height="15" viewBox="0 0 15 15" fill="currentColor" aria-hidden="true"><path d="M0 0H15V2.500H0ZM7.500 3.500L13 9H9.500V15H5.500V9H2Z" /></svg>
        </TitleIcon>
        <TitleIcon label="복사">
          <svg width="17" height="16" viewBox="0 0 17 16" fill="none" stroke="currentColor" strokeWidth="1.400" aria-hidden="true"><path d="M5 1H16V10.500H5ZM5 2.500H16" /><path d="M3 5H1V14.500H12V12.500" /></svg>
        </TitleIcon>
        <TitleIcon label="고정">
          <svg width="14" height="17" viewBox="0 0 14 17" fill="currentColor" aria-hidden="true"><path d="M2 0H12V2H11V7L14 9V11H7.700V17H6.300V11H0V9L3 7V2H2Z" /></svg>
        </TitleIcon>
        <TitleIcon label="글꼴" width="w-5"><span className="font-['Liberation_Serif'] text-[20px] leading-5 font-bold">T</span></TitleIcon>
        <TitleIcon label="도움말" width="w-5"><span className="font-['Liberation_Sans'] text-[18px] leading-5">?</span></TitleIcon>
        <i className="mr-[4px] ml-[7px] h-[17px] w-px bg-[#7288b8]" />
        <TitleIcon label="최소화"><svg width="13" height="14" viewBox="0 0 13 14" fill="currentColor" aria-hidden="true"><path d="M0 11H13V14H0Z" /></svg></TitleIcon>
        <TitleIcon label="최대화"><svg width="14" height="13" viewBox="0 0 14 13" fill="none" stroke="currentColor" aria-hidden="true"><path d="M.7 2V12.300H13.300V2" strokeWidth="1.400" /><path d="M0 1.500H14" strokeWidth="3" /></svg></TitleIcon>
        <TitleIcon label="닫기"><svg width="12" height="12" viewBox="0 0 12 12" stroke="currentColor" strokeWidth="1.200" aria-hidden="true"><path d="M0 0L12 12M12 0L0 12" /></svg></TitleIcon>
      </div>
    </header>
  );
}

export default function App() {
  return (
    <div className="flex min-h-screen flex-col bg-[#9d9d9d] font-['Noto_Sans_Mono_CJK_KR','Noto_Sans_CJK_KR',monospace]">
      <TitleBar />
      <div className="flex flex-1 flex-col border-r-4 border-b-[5px] border-l-[5px] border-[#9d9d9d]">
        <Toolbar />
        <main className="grid flex-1 grid-cols-2 bg-[#e8e8e8] pt-[2px] pr-[7px] pb-[6px] pl-[4px]">
          {PANELS.map((p) => <ChartPanel key={p.id} p={p} />)}
        </main>
      </div>
    </div>
  );
}
